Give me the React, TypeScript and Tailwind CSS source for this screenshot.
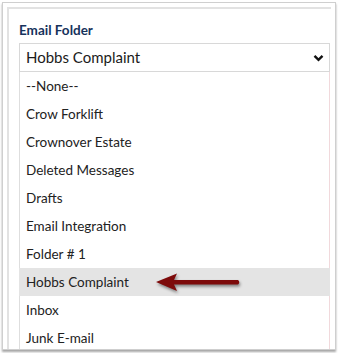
const folders = [
  '--None--',
  'Crow Forklift',
  'Crownover Estate',
  'Deleted Messages',
  'Drafts',
  'Email Integration',
  'Folder # 1',
  'Hobbs Complaint',
  'Inbox',
  'Junk E-mail',
];

function Chevron() {
  return (
    <svg width="11" height="8" viewBox="0 0 11 8" className="text-[#111]">
      <path d="M1.5 1.8 L5.5 5.8 L9.5 1.8" fill="none" stroke="currentColor" strokeWidth="2.4" />
    </svg>
  );
}

function Arrow() {
  return (
    <svg
      width="90"
      height="26"
      viewBox="0 0 90 26"
      className="absolute left-[133px] top-[4px] drop-shadow-[1px_2px_1.5px_rgba(0,0,0,0.45)]"
    >
      <path
        d="M4 10 L25 1.5 L22 8 L86 8 Q88.5 10 86 12.5 L22 12.5 L25 19 Z"
        fill="#7d0b0b"
      />
    </svg>
  );
}

export default function App() {
  return (
    <div className="w-[338px] h-[353px] bg-white overflow-hidden font-['Lato',sans-serif]">
      <div className="ml-[2px] mt-[2px] w-[334px] h-[348px] border border-[#cfcfcf] bg-white shadow-[0_2px_2px_rgba(0,0,0,0.35)] overflow-hidden">
        <div className="ml-[4px] mt-[4px] w-[324px] h-[360px] border-l-2 border-t-2 border-[#e2e2e2] pl-[10px]">
          <div className="pt-[13px] text-[13.5px] leading-[16px] font-bold text-[#16325c]">
            Email Folder
          </div>
          <div className="mt-[5px] w-[311px]">
            <div className="h-[29px] border border-[#d8d8d8] flex items-center justify-between pl-[6px] pr-[5px]">
              <span className="text-[15px] text-[#1b1b1b]">Hobbs Complaint</span>
              <Chevron />
            </div>
            <div className="border-x border-[#dedede] border-r-[#f1d9dc]">
              {folders.map((f, i) => (
                <div
                  key={f}
                  className={
                    'relative h-[28px] flex items-center pl-[6px] text-[13.5px] text-[#222] ' +
                    (i === 7 ? 'bg-[#e4e4e4] -mx-px pl-[7px]' : 'bg-white')
                  }
                >
                  {f}
                  {i === 7 && <Arrow />}
                </div>
              ))}
            </div>
          </div>
        </div>
      </div>
    </div>
  );
}
